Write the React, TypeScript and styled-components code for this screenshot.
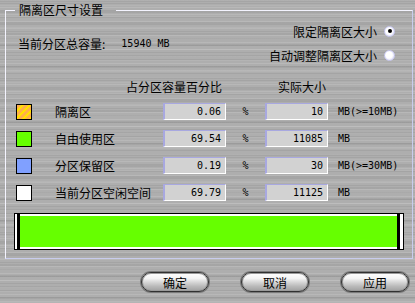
import React from 'react'
import styled, { createGlobalStyle } from 'styled-components'

const GlobalStyle = createGlobalStyle`
  html, body {
    margin: 0;
    padding: 0;
  }
  body {
    width: 415px;
    height: 303px;
    overflow: hidden;
    font-family: "Noto Sans CJK SC", "DejaVu Sans", sans-serif;
    font-size: 12px;
    color: #000;
  }
`

const Window = styled.div`
  width: 415px;
  height: 303px;
  box-sizing: border-box;
  padding-top: 3px;
  background-color: #aeaeae;
  background-image:
    repeating-linear-gradient(180deg, rgba(255,255,255,0.12) 0 1px, transparent 1px 3px, rgba(0,0,0,0.06) 3px 4px, transparent 4px 7px),
    repeating-linear-gradient(180deg, rgba(0,0,0,0.05) 0 2px, transparent 2px 5px, rgba(255,255,255,0.08) 5px 6px, transparent 6px 11px);
  display: flex;
  flex-direction: column;
`

const Group = styled.fieldset`
  margin: 0 2px 0 5px;
  padding: 0;
  height: 256px;
  box-sizing: border-box;
  border: 1px solid #f4f4ff;
  border-bottom-color: #c8ccee;
  border-right-color: #c8ccee;
  min-width: 0;
`

const Legend = styled.legend`
  margin-left: 9px;
  padding: 0 13px 0 4px;
  line-height: 14px;
  font-size: 12px;
`

const Body = styled.div`
  padding: 6px 17px 0 12px;
  display: flex;
  flex-direction: column;
`

const TopSection = styled.div`
  display: flex;
  align-items: center;
  justify-content: space-between;
`

const Total = styled.div`
  display: flex;
  align-items: center;
  padding-top: 1px;
`

const TotalValue = styled.span`
  font-family: "DejaVu Sans Mono", monospace;
  font-size: 10px;
  margin-left: 16px;
`

const RadioColumn = styled.div`
  display: flex;
  flex-direction: column;
  align-items: flex-end;
  gap: 8px;
`

const RadioRow = styled.label`
  display: flex;
  align-items: center;
  gap: 7px;
  height: 16px;
`

const RadioDot = styled.span<{ $checked?: boolean }>`
  width: 11px;
  height: 11px;
  border-radius: 50%;
  border: 1px solid #c8c8f0;
  background: radial-gradient(circle at 45% 45%, #ffffff 0 45%, #e4e4f8 70%);
  box-sizing: border-box;
  display: flex;
  align-items: center;
  justify-content: center;
  &::after {
    content: '';
    width: 4px;
    height: 4px;
    border-radius: 50%;
    background: #000;
    display: ${p => (p.$checked ? 'block' : 'none')};
  }
`

const Table = styled.div`
  margin-top: 13px;
  margin-left: -2px;
  margin-right: -2px;
  display: grid;
  grid-template-columns: 39px 108px 63px 39px 63px 1fr;
  grid-auto-rows: 17px;
  row-gap: 10px;
  align-items: center;
`

const Header = styled.div<{ $col: string; $shift?: number }>`
  grid-column: ${p => p.$col};
  justify-self: ${p => (p.$shift ? 'start' : 'end')};
  margin-left: ${p => p.$shift || 0}px;
  margin-right: ${p => (p.$shift ? 0 : 4)}px;
  margin-bottom: -4px;
`

const Swatch = styled.div<{ $color: string; $striped?: boolean }>`
  width: 16px;
  height: 16px;
  box-sizing: border-box;
  border: 1px solid #000;
  background: ${p =>
    p.$striped
      ? `repeating-linear-gradient(135deg, ${p.$color} 0 3px, #ffe000 3px 5px)`
      : p.$color};
`

const Label = styled.div``

const Field = styled.div`
  height: 17px;
  box-sizing: border-box;
  background: #d2d2d2;
  border: 1px solid #fff;
  border-left: 2px solid #a8a8e0;
  border-top: 1px solid #a8a8e0;
  font-family: "DejaVu Sans Mono", monospace;
  font-size: 10px;
  text-align: right;
  padding-right: 4px;
  line-height: 15px;
`

const Percent = styled.div`
  justify-self: center;
  font-family: "DejaVu Sans Mono", monospace;
  font-size: 10px;
`

const Unit = styled.div`
  padding-left: 10px;
  font-family: "DejaVu Sans Mono", monospace;
  font-size: 10px;
  white-space: nowrap;
`

const Bar = styled.div`
  margin: 12px -9px 0 -4px;
  height: 37px;
  box-sizing: border-box;
  border: 1px solid #000;
  background: #fff;
  display: flex;
`

const BarEdge = styled.div<{ $w: number }>`
  width: ${p => p.$w}px;
  background: #fff;
`

const BarMark = styled.div`
  width: 3px;
  background: #000;
`

const BarFill = styled.div`
  flex: 1;
  background: #66ff00;
  border-top: 2px solid #fff;
  border-bottom: 2px solid #fff;
`

const Buttons = styled.div`
  display: flex;
  justify-content: flex-end;
  gap: 32px;
  padding: 13px 6px 0 0;
`

const Button = styled.button`
  width: 68px;
  height: 20px;
  border-radius: 10px;
  border: 1px solid #303030;
  box-shadow: 0 0 0 1px #7a7a7a, inset 0 0 0 1px #9a9a9a;
  background: linear-gradient(180deg, #ffffff 0%, #f4f4f4 30%, #d8d8d8 50%, #b8b8b8 75%, #a0a0a0 100%);
  font-family: "Noto Sans CJK SC", sans-serif;
  font-size: 12px;
  line-height: 16px;
  padding: 2px 0 0 0;
  color: #000;
`

const rows = [
  { label: '隔离区', color: '#ffb048', striped: true, pct: '0.06', size: '10', unit: 'MB(>=10MB)' },
  { label: '自由使用区', color: '#66ff00', pct: '69.54', size: '11085', unit: 'MB' },
  { label: '分区保留区', color: '#80a0ff', pct: '0.19', size: '30', unit: 'MB(>=30MB)' },
  { label: '当前分区空闲空间', color: '#ffffff', pct: '69.79', size: '11125', unit: 'MB' },
]

export default function App() {
  return (
    <Window>
      <GlobalStyle />
      <Group>
        <Legend>隔离区尺寸设置</Legend>
        <Body>
          <TopSection>
            <Total>
              当前分区总容量:
              <TotalValue>15940 MB</TotalValue>
            </Total>
            <RadioColumn>
              <RadioRow>
                限定隔离区大小
                <RadioDot $checked />
              </RadioRow>
              <RadioRow>
                自动调整隔离区大小
                <RadioDot />
              </RadioRow>
            </RadioColumn>
          </TopSection>
          <Table>
            <Header $col="2 / 4">占分区容量百分比</Header>
            <Header $col="5 / 7" $shift={13}>实际大小</Header>
            {rows.map(r => (
              <React.Fragment key={r.label}>
                <Swatch $color={r.color} $striped={r.striped} />
                <Label>{r.label}</Label>
                <Field>{r.pct}</Field>
                <Percent>%</Percent>
                <Field>{r.size}</Field>
                <Unit>{r.unit}</Unit>
              </React.Fragment>
            ))}
          </Table>
          <Bar>
            <BarEdge $w={2} />
            <BarMark />
            <BarFill />
            <BarMark />
            <BarEdge $w={3} />
          </Bar>
        </Body>
      </Group>
      <Buttons>
        <Button>确定</Button>
        <Button>取消</Button>
        <Button>应用</Button>
      </Buttons>
    </Window>
  )
}
